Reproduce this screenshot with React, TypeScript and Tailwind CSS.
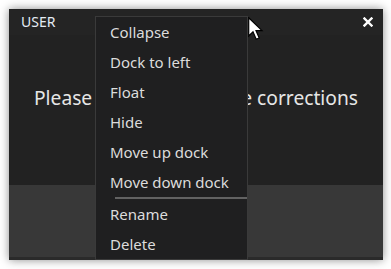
import { useState } from "react";

const menuItems = ["Collapse", "Dock to left", "Float", "Hide", "Move up dock", "Move down dock"];
const extraItems = ["Rename", "Delete"];

function CloseIcon() {
  return (
    <svg width="10" height="10" viewBox="0 0 10 10" className="block">
      <path d="M1.5 1.5 L8.5 8.5 M8.5 1.5 L1.5 8.5" stroke="#ffffff" strokeWidth="2.4" strokeLinecap="square" />
    </svg>
  );
}

function Cursor() {
  return (
    <svg width="16" height="24" viewBox="0 0 16 24" className="block">
      <path
        d="M0.7 0.7 L0.7 19 L5 14.8 L8.2 22.3 L11.2 21 L8 13.6 L14 13.6 Z"
        fill="#ffffff"
        stroke="#000000"
        strokeWidth="1.2"
        strokeLinejoin="miter"
      />
    </svg>
  );
}

export default function App() {
  const [active, setActive] = useState<string | null>(null);

  return (
    <div className="relative h-[269px] w-[391px] bg-white p-[9px] pb-0 font-['Noto_Sans','Open_Sans',sans-serif]">
      <div className="flex h-[251px] w-[374px] flex-col bg-[#222222] shadow-[0_0_9px_rgba(0,0,0,0.45)]">
        <div className="flex h-[26px] items-center justify-between bg-[#242424] pl-[12px] pr-[10px]">
          <span className="text-[14px] leading-none text-[#e4ecf4]">USER</span>
          <CloseIcon />
        </div>
        <div className="h-[150px] pt-[49px] text-center">
          <p className="whitespace-nowrap text-[19.2px] leading-[28px] text-[#e6e6e6]">Please double-check the corrections</p>
        </div>
        <div className="flex-1 border-b-[3px] border-[#2a2a2a] bg-[#383838]" />
      </div>

      <div className="absolute left-[95px] top-[16px] w-[153px] border border-[#3a3a3a] bg-[#1f1f20] text-[15px] text-[#dcdcdc]">
        {menuItems.map((item) => (
          <div
            key={item}
            onMouseEnter={() => setActive(item)}
            onMouseLeave={() => setActive(null)}
            className={`flex h-[30px] items-center pl-[14px] ${active === item ? "bg-[#2c2c2c]" : ""}`}
          >
            {item}
          </div>
        ))}
        <div className="ml-[19px] h-[2px] bg-[#626262]" />
        {extraItems.map((item) => (
          <div
            key={item}
            onMouseEnter={() => setActive(item)}
            onMouseLeave={() => setActive(null)}
            className={`flex h-[30px] items-center pl-[14px] ${active === item ? "bg-[#2c2c2c]" : ""}`}
          >
            {item}
          </div>
        ))}
      </div>

      <div className="pointer-events-none absolute left-[248px] top-[17px]">
        <Cursor />
      </div>
    </div>
  );
}
